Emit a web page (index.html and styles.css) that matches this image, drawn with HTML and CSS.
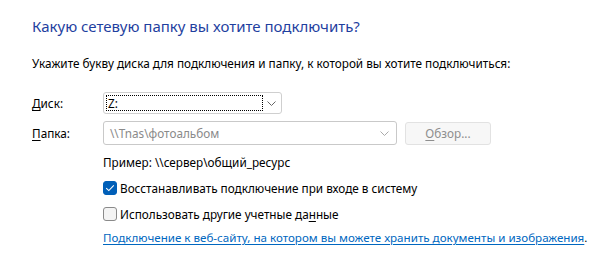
FILE: index.html
```html
<!DOCTYPE html>
<html lang="ru">
<head>
  <meta charset="UTF-8" />
  <title>Подключить сетевой диск</title>
  <link rel="stylesheet" href="styles.css">
</head>
<body>
<div id="page">
  <h1 class="title">Какую сетевую папку вы хотите подключить?</h1>
  <p class="intro">Укажите букву диска для подключения и папку, к которой вы хотите подключиться:</p>

  <div class="form">
    <label class="lbl"><u>Д</u>иск:</label>
    <div class="combo drive">
      <span class="focus">Z:</span>
      <svg class="chev" width="9" height="5" viewBox="0 0 9 5"><path d="M0.5 0.5 L4.5 4.5 L8.5 0.5" fill="none" stroke="#666" stroke-width="1"/></svg>
    </div>

    <label class="lbl"><u>П</u>апка:</label>
    <div class="folder-row">
      <div class="combo folder">
        <span class="val">\\Tnas\фотоальбом</span>
        <svg class="chev" width="9" height="5" viewBox="0 0 9 5"><path d="M0.5 0.5 L4.5 4.5 L8.5 0.5" fill="none" stroke="#aaa" stroke-width="1"/></svg>
      </div>
      <button class="browse"><u>О</u>бзор...</button>
    </div>

    <span></span>
    <div class="opts">
      <div class="example">Пример: \\сервер\общий_ресурс</div>
      <div class="check">
        <span class="box on"><svg width="10" height="8" viewBox="0 0 10 8"><path d="M1.2 4.2 L3.8 6.6 L8.8 1.4" fill="none" stroke="#fff" stroke-width="1.1"/></svg></span>
        <span>Восстанавливать подключение при входе в систему</span>
      </div>
      <div class="check">
        <span class="box"></span>
        <span>Использовать другие учетные да<u>н</u>ные</span>
      </div>
      <div class="linkline"><a href="#">Подключение к веб-сайту, на котором вы можете хранить документы и изображения</a>.</div>
    </div>
  </div>
</div>
</body>
</html>
```

FILE: styles.css
```css
* { box-sizing: border-box; margin: 0; padding: 0; }
html, body { background: #fff; font-family: "Noto Sans", sans-serif; font-size: 11.75px; color: #000; }
#page { padding: 15px 0 0 32px; }
.title { font-size: 15px; font-weight: normal; color: #1f3f9f; line-height: 22px; }
.intro { margin-top: 18px; line-height: 16px; }
.form {
  margin-top: 21px;
  display: grid;
  grid-template-columns: 71px auto;
  row-gap: 7px;
  align-items: center;
}
.form u { text-decoration: underline; text-underline-offset: 2px; }
.combo {
  position: relative;
  height: 22px;
  border: 1px solid #cfcfcf;
  border-radius: 3px;
  background: #fff;
  display: flex; align-items: center;
}
.drive { width: 179px; }
.focus {
  margin-left: 2px;
  width: 157px; height: 16px;
  border: 1px dotted #000;
  line-height: 14px; padding-left: 1px;
}
.chev { position: absolute; right: 5px; top: 8px; }
.folder .chev { top: 9px; right: 7px; }
.folder-row { display: flex; gap: 8px; align-items: center; }
.folder { width: 294px; height: 24px; border-color: #c9c9c9; }
.val { margin-left: 6px; color: #8a8a8a; }
.browse {
  width: 86px; height: 23px;
  border: 1px solid #e2e2e2; border-radius: 3px;
  background: #f7f7f7; color: #8e8e8e;
  font: inherit;
}
.opts { display: flex; flex-direction: column; }
.example { line-height: 16px; margin-top: 2px; }
.check { display: flex; align-items: center; gap: 3px; margin-top: 10px; line-height: 16px; }
.box {
  width: 14px; height: 14px;
  border: 1px solid #8a8a8a; border-radius: 3px;
  background: #f4f4f4;
  display: flex; align-items: center; justify-content: center;
}
.box.on { background: #005fb8; border-color: #005fb8; }
.linkline { margin-top: 8px; line-height: 16px; white-space: nowrap; font-size: 11.6px; }
.linkline a { color: #0067c0; text-underline-offset: 2px; }
```
